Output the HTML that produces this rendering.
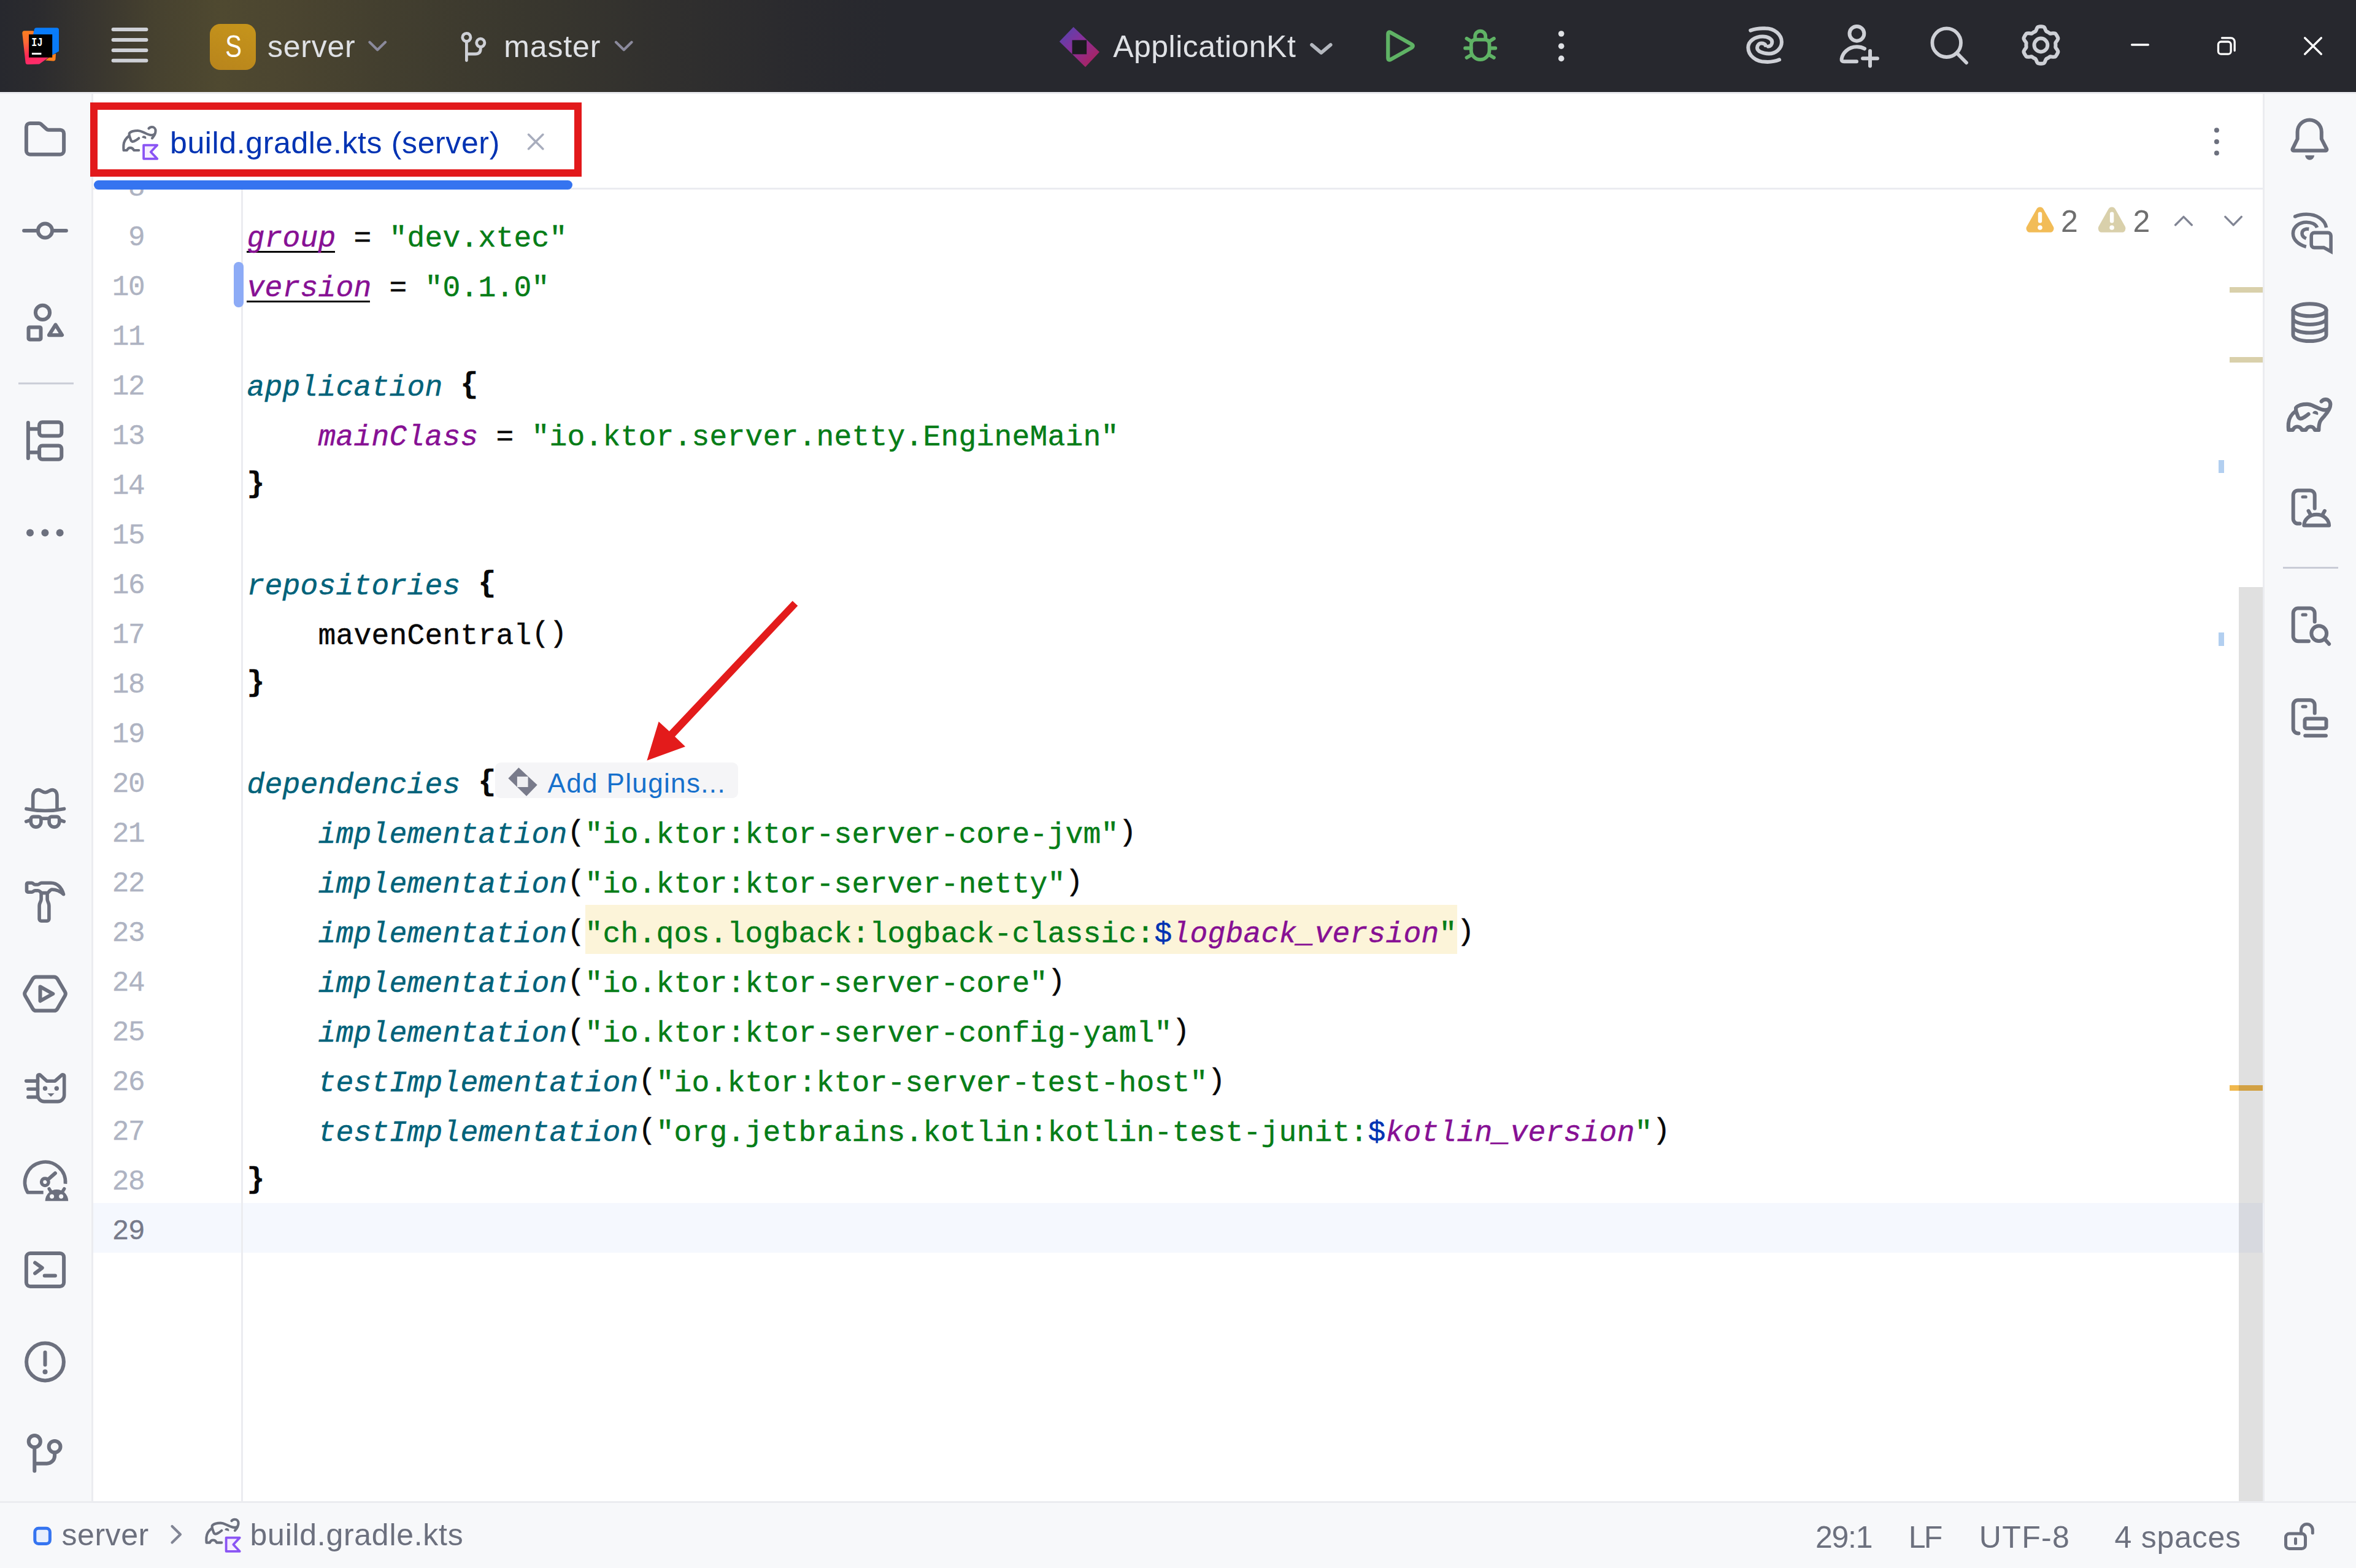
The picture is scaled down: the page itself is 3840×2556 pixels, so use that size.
<!DOCTYPE html>
<html lang="en">
<head>
<meta charset="utf-8">
<title>server – build.gradle.kts (server)</title>
<style>
*{box-sizing:border-box;margin:0;padding:0}
html,body{width:3840px;height:2556px;overflow:hidden;background:#fff}
body{position:relative;font-family:"Liberation Sans",sans-serif;color:#000}
.abs{position:absolute}
svg{position:absolute;overflow:visible}
.ui{position:absolute;white-space:nowrap;font-family:"Liberation Sans",sans-serif;line-height:1}
/* title bar */
#titlebar{left:0;top:0;width:3840px;height:150px;background:linear-gradient(90deg,#27282e 0px,#2b2b2e 60px,#38352f 150px,#46412f 250px,#4f4930 360px,#4b4530 470px,#433f2f 620px,#39372e 860px,#302f2e 1100px,#2a2a2e 1300px,#27282e 1450px,#27282e 3840px)}
#tbline{left:0;top:150px;width:3840px;height:3px;background:#ebecf0}
.tbt{color:#dfe1e5;font-size:52px}
/* side bars */
#lside{left:0;top:153px;width:152px;height:2295px;background:#f7f8fa;border-right:3px solid #ebecf0}
#rside{left:3688px;top:153px;width:152px;height:2295px;background:#f7f8fa;border-left:3px solid #ebecf0}
/* tabs */
#tabline{left:152px;top:306px;width:3537px;height:3px;background:#ebecf0}
#tabsel{left:153px;top:294px;width:780px;height:15px;border-radius:7.5px;background:#3574f0}
#redbox{left:147px;top:167px;width:801px;height:121px;border:12px solid #e2191b}
#tabtxt{left:277px;top:208px;font-size:50px;letter-spacing:.62px;color:#0033b3}
/* editor */
#gutline{left:393px;top:309px;width:3px;height:2138px;background:#ebecf0}
#caretrow{left:152px;top:1961px;width:3537px;height:81px;background:#f5f8fe}
.ln{position:absolute;left:150.5px;width:85px;letter-spacing:-1.2px;-webkit-text-stroke:.3px;text-align:right;font:46px/81px "Liberation Mono",monospace;color:#aeb3c2;white-space:pre;height:81px}
.cl{position:absolute;left:402.5px;font:48px/81px "Liberation Mono",monospace;letter-spacing:.195px;-webkit-text-stroke:.45px;white-space:pre;height:81px;color:#080808}
.p{color:#871094;font-style:italic}
.f{color:#00627a;font-style:italic}
.s{color:#067d17}
.d{color:#0033b3}
.u{border-bottom:3.5px solid #080808;display:inline-block;line-height:53px;height:58px}
.b{font-weight:bold;position:relative;top:-5px}
.k{position:relative;top:-4.5px}
.hl{background:#fcf4d9;display:inline-block;height:81px}
#clip{left:152px;top:309px;width:3537px;height:2138px;overflow:hidden}
/* status */
#status{left:0;top:2447px;width:3840px;height:109px;background:#f7f8fa;border-top:3px solid #ebecf0}
.st{color:#6c707e;font-size:52px}
</style>
</head>
<body>
<div id="titlebar" class="abs"></div>
<div id="tbline" class="abs"></div>

<!-- TB-START -->
<svg id="tbicons" style="left:0;top:0" width="3840" height="150" viewBox="0 0 3840 150" fill="none" stroke-linecap="round" stroke-linejoin="round">
<defs>
<linearGradient id="gApp" x1="0" y1="0" x2="1" y2="1"><stop offset="0" stop-color="#4b47b0"/><stop offset=".45" stop-color="#8a2f9a"/><stop offset="1" stop-color="#b0204f"/></linearGradient>
<linearGradient id="gLeft" x1="0" y1="0" x2="0.25" y2="1"><stop offset="0" stop-color="#fc801d"/><stop offset=".35" stop-color="#fd6a35"/><stop offset=".75" stop-color="#fe2857"/><stop offset="1" stop-color="#fe2c6a"/></linearGradient><linearGradient id="gBlue" x1="1" y1="0" x2="0" y2="1"><stop offset="0" stop-color="#087cfa"/><stop offset=".6" stop-color="#0a7bf8"/><stop offset="1" stop-color="#5a63d8"/></linearGradient>
</defs>
<!-- IJ logo -->
<path d="M36.3 54Q36.3 50.5 40 50.3L53 50.2Q56 50.2 56.5 53L60 70L80 93L64 104.6L45 105Q42 105 41.6 102Z" fill="url(#gLeft)"/>
<path d="M74 98.5L85 89.5L91 87.5L90.5 96Q90.3 99.3 87 99.4Z" fill="#fc801d"/>
<path d="M56 47.5Q56.6 45.2 59.5 45.2H92.5Q96 45.2 96 48.7V83.5L84 90.5L54 90V56Z" fill="url(#gBlue)"/>
<rect x="47" y="56.1" width="38.2" height="37.6" fill="#000"/>
<rect x="51.9" y="86" width="15.5" height="3.1" fill="#fff"/>
<text transform="translate(51.3 74.8) scale(.74 1)" font-family="Liberation Mono,monospace" font-weight="bold" font-size="20.5" fill="#fff" stroke="none">IJ</text>
<!-- hamburger -->
<g stroke="#ced0d6" stroke-width="6"><path d="M184.6 47.9H238.4M184.6 65H238.4M184.6 82H238.4M184.6 98.8H238.4"/></g>
<!-- chevrons -->
<g stroke="#8b8a9c" stroke-width="4.2"><path d="M602.5 68.8L615.2 81.2L628 68.8M1004 68.8L1016.8 81.2L1029.5 68.8"/></g>
<path d="M2138 73L2153.4 86L2168.8 73" stroke="#b4b8bf" stroke-width="5.6"/>
<!-- branch -->
<g stroke="#ced0d6" stroke-width="4.8"><circle cx="760.4" cy="60.9" r="6.6"/><circle cx="783.3" cy="69.8" r="6.6"/><path d="M760.4 67.5V98.6M783.3 76.4V79.5Q783.3 88 774.5 88H760.4"/></g>
<!-- run config icon -->
<path d="M1749.6 44L1792 84.7L1769 109.3L1726.7 67.7Z" fill="url(#gApp)"/>
<rect x="1747.5" y="65.4" width="23.6" height="23" fill="#1b1b20"/>
<!-- play -->
<path d="M2262.3 56V94Q2262.3 99.5 2267 96.8L2300.3 78Q2305.3 75 2300.3 72L2267 53.2Q2262.3 50.5 2262.3 56Z" stroke="#5fb365" stroke-width="6.2"/>
<!-- bug -->
<g stroke="#5fb365" stroke-width="5.8"><path d="M2397.8 72.6Q2397.8 64.6 2405.9 64.6H2419.5Q2427.5 64.6 2427.5 72.6V82.2A14.85 14.9 0 0 1 2397.8 82.2Z"/><path d="M2404.2 64V59.1A8.5 8.5 0 0 1 2421.2 59.1V64"/><path d="M2390.5 62.8L2398.5 67.8M2388.1 78.5H2397.5M2390.5 93.9L2398.5 89.3M2434.9 62.8L2426.9 67.8M2437.3 78.5H2427.9M2434.9 93.9L2426.9 89.3"/></g>
<!-- kebab -->
<g fill="#dfe1e5"><circle cx="2544.7" cy="55" r="4.8"/><circle cx="2544.7" cy="75.2" r="4.8"/><circle cx="2544.7" cy="95.4" r="4.8"/></g>
<!-- AI spiral -->
<g stroke="#ced0d6" stroke-width="6"><path d="M2853.2 49.6Q2864 45.5 2877.5 46.3A26.4 22.3 0 0 1 2903.9 68.6A20.9 18.9 0 0 1 2883 87.5A19 9.6 0 0 1 2864 77.9A6.8 7.4 0 0 1 2870.8 70.5A6.7 3.6 0 0 1 2877.5 74.1"/><path d="M2900.1 97.3Q2890 101.5 2877.5 100.8A28.2 23.4 0 0 1 2849.3 77.4A23.7 17.9 0 0 1 2873 59.5A15.3 9.1 0 0 1 2888.3 68.6A6.4 7.1 0 0 1 2881.9 75.7"/></g>
<!-- person+ -->
<g stroke="#ced0d6" stroke-width="6"><circle cx="3026.4" cy="54.8" r="11.9"/><path d="M3039 79.3C3035 77 3031 76.3 3026.4 76.3C3012 76.3 3003 87 3001.6 96Q3001 100.3 3005.5 100.3H3026"/><path d="M3036.1 95.3H3059.9M3048 83.1V107.5"/></g>
<!-- search -->
<g stroke="#ced0d6" stroke-width="5.8"><circle cx="3172.7" cy="69.7" r="23.3"/><path d="M3189.5 86.5L3205 102.3"/></g>
<!-- gear -->
<g stroke="#ced0d6" stroke-width="6"><path d="M3350.4 73.5 L3350.4 72.5 L3350.3 71.4 L3350.2 70.4 L3350.5 69.3 L3351.5 67.9 L3352.6 66.5 L3353.5 64.9 L3354.3 63.3 L3354.3 61.9 L3353.8 60.7 L3353.2 59.6 L3352.6 58.4 L3351.9 57.3 L3351.1 56.2 L3350.4 55.1 L3349.2 54.4 L3347.4 54.3 L3345.6 54.3 L3343.8 54.5 L3342.1 54.8 L3341.0 54.5 L3340.2 53.8 L3339.3 53.3 L3338.4 52.7 L3337.5 52.2 L3336.5 51.7 L3335.6 51.3 L3334.8 50.5 L3334.1 49.0 L3333.4 47.3 L3332.6 45.7 L3331.6 44.2 L3330.3 43.6 L3329.0 43.4 L3327.7 43.3 L3326.4 43.3 L3325.1 43.3 L3323.8 43.4 L3322.5 43.6 L3321.2 44.2 L3320.2 45.7 L3319.4 47.3 L3318.7 49.0 L3318.0 50.5 L3317.2 51.3 L3316.3 51.7 L3315.3 52.2 L3314.4 52.7 L3313.5 53.3 L3312.6 53.8 L3311.8 54.5 L3310.7 54.8 L3309.0 54.5 L3307.2 54.3 L3305.4 54.3 L3303.6 54.4 L3302.4 55.1 L3301.7 56.2 L3300.9 57.3 L3300.2 58.4 L3299.6 59.6 L3299.0 60.7 L3298.5 61.9 L3298.5 63.3 L3299.3 64.9 L3300.2 66.5 L3301.3 67.9 L3302.3 69.3 L3302.6 70.4 L3302.5 71.4 L3302.4 72.5 L3302.4 73.5 L3302.4 74.5 L3302.5 75.6 L3302.6 76.6 L3302.3 77.7 L3301.3 79.1 L3300.2 80.5 L3299.3 82.1 L3298.5 83.7 L3298.5 85.1 L3299.0 86.3 L3299.6 87.4 L3300.2 88.6 L3300.9 89.7 L3301.7 90.8 L3302.4 91.9 L3303.6 92.6 L3305.4 92.7 L3307.2 92.7 L3309.0 92.5 L3310.7 92.2 L3311.8 92.5 L3312.6 93.2 L3313.5 93.7 L3314.4 94.3 L3315.3 94.8 L3316.3 95.3 L3317.2 95.7 L3318.0 96.5 L3318.7 98.0 L3319.4 99.7 L3320.2 101.3 L3321.2 102.8 L3322.5 103.4 L3323.8 103.6 L3325.1 103.7 L3326.4 103.7 L3327.7 103.7 L3329.0 103.6 L3330.3 103.4 L3331.6 102.8 L3332.6 101.3 L3333.4 99.7 L3334.1 98.0 L3334.8 96.5 L3335.6 95.7 L3336.5 95.3 L3337.5 94.8 L3338.4 94.3 L3339.3 93.7 L3340.2 93.2 L3341.0 92.5 L3342.1 92.2 L3343.8 92.5 L3345.6 92.7 L3347.4 92.7 L3349.2 92.6 L3350.4 91.9 L3351.1 90.8 L3351.9 89.7 L3352.6 88.6 L3353.2 87.4 L3353.8 86.3 L3354.3 85.1 L3354.3 83.7 L3353.5 82.1 L3352.6 80.5 L3351.5 79.1 L3350.5 77.7 L3350.2 76.6 L3350.3 75.6 L3350.4 74.5Z"/><circle cx="3326.4" cy="73.5" r="10.9"/></g>
<!-- window controls -->
<g stroke="#fff" stroke-width="3.3"><path d="M3474.6 73H3501.4"/><rect x="3615.5" y="68" width="20.6" height="20.2" rx="4.5"/><path d="M3621.5 61.8H3636A6.2 6.2 0 0 1 3642.2 68V82.5"/><path d="M3756.6 61.8L3783.4 88.2M3783.4 61.8L3756.6 88.2"/></g>
</svg>
<!-- TB-END -->
<div class="abs" style="left:342px;top:39px;width:75px;height:75px;border-radius:17px;background:linear-gradient(200deg,#c6951b,#b8841c)"></div>
<div class="ui" style="left:343px;top:50.5px;width:75px;text-align:center;font-size:50px;color:#fff;transform:scaleX(.8)">S</div>
<div class="ui tbt" id="t_server" style="left:436.0px;top:51.0px;font-size:50px;letter-spacing:0.76px">server</div>
<div class="ui tbt" id="t_master" style="left:821.2px;top:51.0px;font-size:50px;letter-spacing:0.88px">master</div>
<div class="ui tbt" id="t_app" style="left:1814.2px;top:50.6px;font-size:50px;letter-spacing:0.48px">ApplicationKt</div>

<div id="lside" class="abs"></div>
<div id="rside" class="abs"></div>
<!-- LEFT-START -->
<svg id="lefticons" style="left:0;top:153px" width="152" height="2295" viewBox="0 153 152 2295" fill="none" stroke="#6c707e" stroke-width="1.5" stroke-linecap="round" stroke-linejoin="round">
<!-- folder -->
<g transform="translate(33.5 186.5) scale(4)"><path d="M2.35 5.1a1.5 1.5 0 0 1 1.5-1.5h3.6a1.2 1.2 0 0 1 .8.3l2.35 2.1a1.2 1.2 0 0 0 .8.3h4.75a1.5 1.5 0 0 1 1.5 1.5v7a1.5 1.5 0 0 1-1.5 1.5H3.85a1.5 1.5 0 0 1-1.5-1.5z"/></g>
<!-- commit -->
<g transform="translate(33.5 336) scale(4)"><circle cx="10" cy="10" r="2.9"/><path d="M1.4 10H7.1M12.9 10H18.6"/></g>
<!-- shapes -->
<g transform="translate(33.5 485) scale(4)"><circle cx="9" cy="6.1" r="2.9"/><rect x="3.25" y="12.1" width="5" height="5" rx=".5"/><path d="M14.25 11.1L16.9 15.3H11.6Z"/></g>
<!-- separator -->
<path d="M30 625H120" stroke="#c9ccd6" stroke-width="3" stroke-linecap="butt"/>
<!-- structure -->
<g transform="translate(33.5 678) scale(4)"><path d="M3.1 2.75V17.25M3.1 5.3H7.65M3.1 14.9H7.65"/><rect x="7.65" y="2.55" width="9.05" height="5.6" rx="1.2"/><rect x="7.65" y="12.1" width="9.05" height="5.6" rx="1.2"/></g>
<!-- more -->
<g fill="#6c707e" stroke="none"><circle cx="49" cy="868.4" r="6"/><circle cx="73.4" cy="868.4" r="6"/><circle cx="97.6" cy="868.4" r="6"/></g>
<!-- hat + glasses -->
<g transform="translate(33.5 1277) scale(4)" stroke-width="1.4"><path d="M5.05 10.2V5.2C5.05 3.5 6.2 2.65 7.3 2.65C8.2 2.65 9 3.7 10.05 3.7C11.1 3.7 11.9 2.65 12.9 2.65C14 2.65 14.87 3.5 14.87 5.2V10.2"/><path d="M2.35 10.35Q10.05 11.9 17.75 10.35"/><path d="M4.2 14.6a1 1 0 0 1 1-1h2.15a1 1 0 0 1 1 1v1.1a2.07 2.07 0 0 1-4.15 0zM11.65 14.6a1 1 0 0 1 1-1h2.15a1 1 0 0 1 1 1v1.1a2.07 2.07 0 0 1-4.15 0z"/><path d="M8.5 14.3H11.5M3.9 15L2.3 15.55M16.1 15L17.7 15.55"/></g>
<!-- hammer -->
<g transform="translate(33.5 1430) scale(4)" stroke-width="1.4"><path d="M2.5 2.8a.5.5 0 0 1 .5-.5h1.6c.5 0 .7.7 1.3.7h1.1c.6 0 .9-.7 1.5-.7h3.9c2.6 0 4.4 2 5.1 4.65c-1.4-1.3-2.9-1.95-4.7-1.95c-.7 0-1.1.8-1.7 1.4h-2.5c-.6-.4-.9-.95-1.5-.95h-1.2c-.6 0-.8.6-1.3.6h-1.6a.5.5 0 0 1-.5-.5z"/><path d="M8.4 6.5V9c0 .9-.75 1.3-.75 2.6V17a.8.8 0 0 0 .8.8h2.35a.8.8 0 0 0 .8-.8V11.6c0-1.3-.7-1.7-.7-2.6V6.5"/></g>
<!-- run hexagon -->
<g transform="translate(33.5 1580) scale(4)"><path d="M1.9 10.8a1.6 1.6 0 0 1 0-1.6l3.1-5.3a1.6 1.6 0 0 1 1.4-.8h7.2a1.6 1.6 0 0 1 1.4.8l3.1 5.3a1.6 1.6 0 0 1 0 1.6l-3.1 5.3a1.6 1.6 0 0 1-1.4.8H6.4a1.6 1.6 0 0 1-1.4-.8z"/><path d="M8 7.1L13.2 10L8 12.9Z"/></g>
<!-- cat -->
<g transform="translate(33.5 1733) scale(4)" stroke-width="1.4"><path d="M7 5.3a.6.6 0 0 1 1-.45L10.7 7.3h3.35l2.75-2.45a.6.6 0 0 1 1 .45v7.7a2.65 2.65 0 0 1-2.65 2.65h-5.5a2.65 2.65 0 0 1-2.65-2.65z"/><path d="M2.3 7.27H7M3.1 10.55H7M3.1 13.85H7"/><circle cx="10" cy="10.3" r=".92" fill="#6c707e" stroke="none"/><circle cx="14.7" cy="10.3" r=".92" fill="#6c707e" stroke="none"/><path d="M10.95 12.3h2.85l-1.43 1.4z" fill="#6c707e" stroke="none"/></g>
<!-- profiler -->
<g transform="translate(33.5 1885) scale(4)"><path d="M9.3 14.7H2.9A8.25 8.25 0 1 1 18.25 11.2" stroke-width="1.4" stroke-linecap="butt"/><circle cx="9.96" cy="10.46" r="1.45" stroke-width="1.35"/><path d="M11.1 9.5L14.1 6.85"/><path d="M10.04 18.18a4.69 4.69 0 0 1 9.38 0z" fill="#6c707e" stroke="none"/><path d="M11.65 13.2l.85 1.4M17.8 13.2l-.85 1.4" stroke-width="1.35"/><circle cx="12.77" cy="16.34" r=".88" fill="#f7f8fa" stroke="none"/><circle cx="16.54" cy="16.34" r=".88" fill="#f7f8fa" stroke="none"/></g>
<!-- terminal -->
<g transform="translate(33.5 2030) scale(4)"><rect x="2.35" y="3.25" width="15.3" height="13.5" rx="1.6"/><path d="M5.9 7.1L8.8 9.2L5.9 11.4M9.8 12.4H14.1"/></g>
<!-- problems -->
<g transform="translate(33.5 2180) scale(4)"><circle cx="10" cy="10" r="7.6"/><path d="M10 6.1V11.2"/><circle cx="10" cy="14.05" r="1" fill="#6c707e" stroke="none"/></g>
<!-- git -->
<g transform="translate(33.5 2329.7) scale(4)"><circle cx="5.7" cy="5" r="2.4"/><circle cx="13.9" cy="7.15" r="2.35"/><path d="M5.7 7.4V17M13.9 9.5v1.3a3.2 3.2 0 0 1-3.2 3.2H5.7"/></g>
</svg>
<!-- LEFT-END -->
<!-- RIGHT-START -->
<svg id="righticons" style="left:3691px;top:153px" width="149" height="2295" viewBox="3691 153 149 2295" fill="none" stroke="#6c707e" stroke-width="1.5" stroke-linecap="round" stroke-linejoin="round">
<!-- bell -->
<g transform="translate(3724.4 186.5) scale(4)"><path d="M5.05 10V7.15a4.9 4.9 0 0 1 9.8 0V10l2.1 4.1a.45.45 0 0 1-.4.65H3.45a.45.45 0 0 1-.4-.65z"/><path d="M8.2 16.7h3.7a1.85 1.85 0 0 1-3.7 0z" fill="#6c707e" stroke="none"/></g>
<!-- AI chat -->
<g transform="translate(3724.5 340) scale(4)" stroke-width="1.4" stroke-linecap="butt"><path d="M4 3.27C5.4 2.6 7 2.3 8.65 2.3c4.3 0 7.5 2.2 8.15 5.44"/><circle cx="4.05" cy="3.25" r=".7" fill="#6c707e" stroke="none"/><path d="M13.04 7.74C12.5 6.4 10.8 5.55 8.65 5.55c-3 0-5.43 2-5.43 4.55c0 2.6 2.2 4.6 5.35 5.45"/><path d="M9.7 8.35C9.3 8.3 8.9 8.3 8.48 8.35c-.95.2-1.6.85-1.6 1.75c0 .95.65 1.65 1.7 2.1"/><path d="M18.65 17.5V11.05a1.2 1.2 0 0 0-1.2-1.2H11.87a1.2 1.2 0 0 0-1.2 1.2V14.7a1.2 1.2 0 0 0 1.2 1.2H15.76z" stroke-linejoin="miter"/></g>
<!-- database -->
<g transform="translate(3724.5 485.7) scale(4)"><ellipse cx="10" cy="4.9" rx="6.75" ry="2.5"/><path d="M3.25 4.9v10.2c0 1.4 3 2.5 6.75 2.5s6.75-1.1 6.75-2.5V4.9M3.25 8.3c0 1.4 3 2.5 6.75 2.5s6.75-1.1 6.75-2.5M3.25 11.7c0 1.4 3 2.5 6.75 2.5s6.75-1.1 6.75-2.5"/></g>
<!-- gradle -->
<g transform="translate(3724.5 636.3) scale(4)" stroke-width="1.55"><path d="M14.8 4.5C15.3 3.9 15.9 3.7 16.5 3.7C17.6 3.7 18.45 4.6 18.45 5.75C18.45 7.5 17.3 9 15.97 10.5C15.2 11.3 14.5 12 14.2 12.8C13.8 13.8 13.7 15 13.7 16.15H12.1C11.8 15.4 11.2 14.8 10.35 14.8C9.5 14.8 8.8 15.4 8.45 16.15H6.85C6.5 15.4 5.8 14.8 4.9 14.8C4.1 14.8 3.5 15.4 3.15 16.15H1.4C1.3 15.2 1.3 14.3 1.35 13.45C1.5 11.5 2.7 9.6 4.2 8.55"/><path d="M17.9 7.5C17.4 7.9 16.8 8.05 16.15 8.03C14.5 8 13.2 7 11.75 6.45C10.8 6 9.9 5.66 8.95 5.66C7.9 5.66 6.9 5.8 6.15 6C5.3 6.3 4.6 6.6 4.4 7.15C4.3 7.6 4.4 8.1 4.5 8.6L5.1 10.3C5.3 11 5.6 11.5 6.15 11.53C6.8 11.55 7.4 11.2 7.9 10.85C8.5 10.5 9 10.1 9.5 9.7"/><path d="M11.4 9.2a.95.95 0 0 1 1.8.55z" fill="#6c707e" stroke-width=".5"/></g>
<!-- device manager -->
<g transform="translate(3724.5 788) scale(4)"><path d="M12.05 10.2V4.85a2 2 0 0 0-2-2H5.3a2 2 0 0 0-2 2v9.55a2 2 0 0 0 2 2H6"/><path d="M7.15 5.5H8.4" stroke-width="1.3"/><path d="M7.7 17.1a5.1 4.4 0 0 1 10.2 0zM9.5 11.2l.9 1.6M16.1 11.2l-.9 1.6"/></g>
<!-- separator -->
<path d="M3721 925.5H3811" stroke="#c9ccd6" stroke-width="3" stroke-linecap="butt"/>
<!-- phone search -->
<g transform="translate(3724.5 981) scale(4)"><path d="M12.05 8.15V4.65a2 2 0 0 0-2-2H5.3a2 2 0 0 0-2 2v9.4a2 2 0 0 0 2 2H9.6"/><path d="M7.15 5.3H8.4" stroke-width="1.3"/><circle cx="13.8" cy="12.9" r="3.1"/><path d="M16.1 15.2L17.9 17.2"/></g>
<!-- phone mirror -->
<g transform="translate(3724.5 1130) scale(4)"><path d="M12.05 8.15V4.8a2 2 0 0 0-2-2H5.3a2 2 0 0 0-2 2v9.55a2 2 0 0 0 2 2H5.5"/><path d="M7.15 5.45H8.4" stroke-width="1.3"/><rect x="8" y="10.4" width="8.75" height="3.9" rx=".6"/><path d="M8.2 17.3H16.6"/></g>
</svg>
<!-- RIGHT-END -->

<!-- tabs -->
<div id="tabline" class="abs"></div>
<div id="tabsel" class="abs"></div>
<div id="tabtxt" class="ui">build.gradle.kts (server)</div>
<div id="redbox" class="abs"></div>
<!-- TAB-ICONS -->

<!-- editor -->
<div id="clip" class="abs">
<div id="caretrow" class="abs" style="left:0;top:1652px"></div>
</div>
<div id="gutline" class="abs"></div>
<!-- CODE-START -->
<div class="abs" id="code" style="left:0;top:309px;width:3689px;height:2138px;overflow:hidden">
<div class="abs" style="left:953.5px;top:1165.6px;width:1421.3px;height:80.8px;background:#fcf4d9"></div>
<div class="abs" style="left:402px;top:99.6px;width:144.2px;height:3.5px;background:#080808"></div>
<div class="abs" style="left:402px;top:180.6px;width:201px;height:3.5px;background:#080808"></div>
<div class="ln" id="ln8" style="top:-41.8px">8</div>
<div class="ln" id="ln9" style="top:39.2px">9</div>
<div class="cl" id="cl9" style="top:40.0px"><span class="p">group</span> = <span class="s">"dev.xtec"</span></div>
<div class="ln" id="ln10" style="top:120.2px">10</div>
<div class="cl" id="cl10" style="top:121.0px"><span class="p">version</span> = <span class="s">"0.1.0"</span></div>
<div class="ln" id="ln11" style="top:201.2px">11</div>
<div class="ln" id="ln12" style="top:282.2px">12</div>
<div class="cl" id="cl12" style="top:283.0px"><span class="f">application</span> <span class="b">{</span></div>
<div class="ln" id="ln13" style="top:363.2px">13</div>
<div class="cl" id="cl13" style="top:364.0px">    <span class="p">mainClass</span> = <span class="s">"io.ktor.server.netty.EngineMain"</span></div>
<div class="ln" id="ln14" style="top:444.2px">14</div>
<div class="cl" id="cl14" style="top:445.0px"><span class="b">}</span></div>
<div class="ln" id="ln15" style="top:525.2px">15</div>
<div class="ln" id="ln16" style="top:606.2px">16</div>
<div class="cl" id="cl16" style="top:607.0px"><span class="f">repositories</span> <span class="b">{</span></div>
<div class="ln" id="ln17" style="top:687.2px">17</div>
<div class="cl" id="cl17" style="top:688.0px">    mavenCentral<span class="k">()</span></div>
<div class="ln" id="ln18" style="top:768.2px">18</div>
<div class="cl" id="cl18" style="top:769.0px"><span class="b">}</span></div>
<div class="ln" id="ln19" style="top:849.2px">19</div>
<div class="ln" id="ln20" style="top:930.2px">20</div>
<div class="cl" id="cl20" style="top:931.0px"><span class="f">dependencies</span> <span class="b">{</span></div>
<div class="ln" id="ln21" style="top:1011.2px">21</div>
<div class="cl" id="cl21" style="top:1012.0px">    <span class="f">implementation</span><span class="k">(</span><span class="s">"io.ktor:ktor-server-core-jvm"</span><span class="k">)</span></div>
<div class="ln" id="ln22" style="top:1092.2px">22</div>
<div class="cl" id="cl22" style="top:1093.0px">    <span class="f">implementation</span><span class="k">(</span><span class="s">"io.ktor:ktor-server-netty"</span><span class="k">)</span></div>
<div class="ln" id="ln23" style="top:1173.2px">23</div>
<div class="cl" id="cl23" style="top:1174.0px">    <span class="f">implementation</span><span class="k">(</span><span class="s">"ch.qos.logback:logback-classic:</span><span class="d">$</span><span class="p">logback_version</span><span class="s">"</span><span class="k">)</span></div>
<div class="ln" id="ln24" style="top:1254.2px">24</div>
<div class="cl" id="cl24" style="top:1255.0px">    <span class="f">implementation</span><span class="k">(</span><span class="s">"io.ktor:ktor-server-core"</span><span class="k">)</span></div>
<div class="ln" id="ln25" style="top:1335.2px">25</div>
<div class="cl" id="cl25" style="top:1336.0px">    <span class="f">implementation</span><span class="k">(</span><span class="s">"io.ktor:ktor-server-config-yaml"</span><span class="k">)</span></div>
<div class="ln" id="ln26" style="top:1416.2px">26</div>
<div class="cl" id="cl26" style="top:1417.0px">    <span class="f">testImplementation</span><span class="k">(</span><span class="s">"io.ktor:ktor-server-test-host"</span><span class="k">)</span></div>
<div class="ln" id="ln27" style="top:1497.2px">27</div>
<div class="cl" id="cl27" style="top:1498.0px">    <span class="f">testImplementation</span><span class="k">(</span><span class="s">"org.jetbrains.kotlin:kotlin-test-junit:</span><span class="d">$</span><span class="p">kotlin_version</span><span class="s">"</span><span class="k">)</span></div>
<div class="ln" id="ln28" style="top:1578.2px">28</div>
<div class="cl" id="cl28" style="top:1579.0px"><span class="b">}</span></div>
<div class="ln" id="ln29" style="top:1659.2px;color:#767a8a">29</div>
</div>
<!-- CODE-END -->

<!-- OVL-START -->
<div class="abs" style="left:381px;top:426.5px;width:15.5px;height:74.5px;border-radius:7.75px;background:#8dabf6"></div>
<!-- error stripes + scrollbar -->
<div class="abs" style="left:3634px;top:467.7px;width:54.3px;height:9px;background:#d9d0ab"></div>
<div class="abs" style="left:3634px;top:581.7px;width:54.3px;height:9px;background:#d9d0ab"></div>
<div class="abs" style="left:3615.5px;top:749.5px;width:9.5px;height:21.5px;background:#b2cff0"></div>
<div class="abs" style="left:3615.5px;top:1031.3px;width:9.5px;height:21.5px;background:#b2cff0"></div>
<div class="abs" style="left:3634px;top:1769px;width:54.3px;height:9px;background:#f0b84e"></div>
<div class="abs" style="left:3649px;top:956.6px;width:39.3px;height:1490.4px;background:rgba(0,0,0,.12)"></div>
<!-- inlay -->
<div class="abs" style="left:807.3px;top:1242.5px;width:395.4px;height:58px;border-radius:9px;background:#f5f5f7"></div>
<div class="ui" id="t_inlay" style="left:892.6px;top:1254.6px;font-size:44px;color:#1670cc;letter-spacing:1.35px">Add Plugins...</div>
<div class="ui" id="t_w1" style="left:3359.0px;top:336.1px;font-size:50px;color:#6e6e6e">2</div>
<div class="ui" id="t_w2" style="left:3476.4px;top:336.1px;font-size:50px;color:#6e6e6e">2</div>
<svg id="ovl" style="left:152px;top:153px" width="3537" height="2295" viewBox="152 153 3537 2295" fill="none" stroke-linecap="round" stroke-linejoin="round">
<!-- inlay icon -->
<path d="M845.4 1251.2L875.7 1279.6L858.1 1297.7L828.4 1268.8Z" fill="#797b8b"/>
<rect x="842.9" y="1265.9" width="17.7" height="17.1" fill="#efeff2"/>
<!-- arrow -->
<path d="M1291.7 979.5L1300.3 987.4L1100 1200.7L1117 1217L1054.4 1239.7L1073.6 1176.2L1090.8 1191.9Z" fill="#e31b1b"/>
<!-- warnings -->
<path d="M3319.6 340.6a6.2 6.2 0 0 1 10.8 0l16.2 28.6a6.4 6.4 0 0 1-5.6 9.6h-32a6.4 6.4 0 0 1-5.6-9.6z" fill="#f2bc57"/>
<path d="M3325 348.7V360.2" stroke="#fff" stroke-width="6.4"/><circle cx="3325" cy="371" r="3.8" fill="#fff"/>
<path d="M3436.7 340.6a6.2 6.2 0 0 1 10.8 0l16.2 28.6a6.4 6.4 0 0 1-5.6 9.6h-32a6.4 6.4 0 0 1-5.6-9.6z" fill="#d9d0ab"/>
<path d="M3442.1 348.7V360.2" stroke="#fff" stroke-width="6.4"/><circle cx="3442.1" cy="371" r="3.8" fill="#fff"/>
<g stroke="#818594" stroke-width="3.4"><path d="M3545.7 366.7L3559 353.4L3572.3 366.7M3626.9 353.4L3640.2 366.9L3653.3 353.4"/></g>
<!-- tab kebab -->
<g fill="#6c707e"><circle cx="3612.9" cy="212.2" r="4"/><circle cx="3612.9" cy="231" r="4"/><circle cx="3612.9" cy="249.6" r="4"/></g>
<!-- tab close -->
<path d="M861.5 219.3L884.9 242.7M884.9 219.3L861.5 242.7" stroke="#a8adbd" stroke-width="3.6"/>
<!-- tab gradle-kotlin icon -->
<g transform="translate(197.3 195.7) scale(3.05)" stroke="#6c707e" stroke-width="1.35"><path d="M14.8 4.5C15.3 3.9 15.9 3.7 16.5 3.7C17.6 3.7 18.45 4.6 18.45 5.75C18.45 7.3 17.6 8.6 16.6 9.7"/><path d="M9.5 16.15H6.85C6.5 15.4 5.8 14.8 4.9 14.8C4.1 14.8 3.5 15.4 3.15 16.15H1.4C1.3 15.2 1.3 14.3 1.35 13.45C1.5 11.5 2.7 9.6 4.2 8.55"/><path d="M17.9 7.5C17.4 7.9 16.8 8.05 16.15 8.03C14.5 8 13.2 7 11.75 6.45C10.8 6 9.9 5.66 8.95 5.66C7.9 5.66 6.9 5.8 6.15 6C5.3 6.3 4.6 6.6 4.4 7.15C4.3 7.6 4.4 8.1 4.5 8.6L5.1 10.3C5.3 11 5.6 11.5 6.15 11.53C6.8 11.55 7.4 11.2 7.9 10.85C8.5 10.5 9 10.1 9.5 9.7"/><path d="M11.4 9.2a.95.95 0 0 1 1.8.55z" fill="#6c707e" stroke-width=".5"/></g>
<path d="M234.1 236.6H256.2L245.8 247.7L256.2 258.8H234.1Z" fill="#f6edff" stroke="#8a54f4" stroke-width="3.8"/>
</svg>
<!-- OVL-END -->

<div id="status" class="abs"></div>
<!-- STATUS-START -->
<div class="ui st" id="t_sserver" style="left:100.6px;top:2476.6px;font-size:50px;letter-spacing:0.52px">server</div>
<div class="ui st" id="t_sfile" style="left:407.6px;top:2476.6px;font-size:50px;letter-spacing:0.72px">build.gradle.kts</div>
<div class="ui st" id="t_pos" style="left:2959.0px;top:2480.7px;font-size:50px;letter-spacing:-1.27px">29:1</div>
<div class="ui st" id="t_lf" style="left:3110.8px;top:2480.7px;font-size:50px;letter-spacing:-2.8px">LF</div>
<div class="ui st" id="t_enc" style="left:3225.8px;top:2480.7px;font-size:50px;letter-spacing:1.35px">UTF-8</div>
<div class="ui st" id="t_ind" style="left:3446.6px;top:2480.7px;font-size:50px;letter-spacing:0.77px">4 spaces</div>
<svg id="sticons" style="left:0;top:2450px" width="3840" height="106" viewBox="0 2450 3840 106" fill="none" stroke-linecap="round" stroke-linejoin="round">
<rect x="56.8" y="2491.2" width="24.6" height="25.3" rx="6" fill="#e7effd" stroke="#3574f0" stroke-width="5"/>
<path d="M280.5 2488L294 2501.3L280.5 2514.6" stroke="#818594" stroke-width="4.2"/>
<g transform="translate(332.3 2465.4) scale(3.05)" stroke="#6c707e" stroke-width="1.35"><path d="M14.8 4.5C15.3 3.9 15.9 3.7 16.5 3.7C17.6 3.7 18.45 4.6 18.45 5.75C18.45 7.3 17.6 8.6 16.6 9.7"/><path d="M9.5 16.15H6.85C6.5 15.4 5.8 14.8 4.9 14.8C4.1 14.8 3.5 15.4 3.15 16.15H1.4C1.3 15.2 1.3 14.3 1.35 13.45C1.5 11.5 2.7 9.6 4.2 8.55"/><path d="M17.9 7.5C17.4 7.9 16.8 8.05 16.15 8.03C14.5 8 13.2 7 11.75 6.45C10.8 6 9.9 5.66 8.95 5.66C7.9 5.66 6.9 5.8 6.15 6C5.3 6.3 4.6 6.6 4.4 7.15C4.3 7.6 4.4 8.1 4.5 8.6L5.1 10.3C5.3 11 5.6 11.5 6.15 11.53C6.8 11.55 7.4 11.2 7.9 10.85C8.5 10.5 9 10.1 9.5 9.7"/><path d="M11.4 9.2a.95.95 0 0 1 1.8.55z" fill="#6c707e" stroke-width=".5"/></g>
<path d="M368.6 2506.6H390.7L380.3 2517.7L390.7 2528.8H368.6Z" fill="#f6edff" stroke="#8a54f4" stroke-width="3.8"/>
<!-- lock -->
<g stroke="#6c707e" stroke-width="5"><rect x="3725.5" y="2500" width="32" height="24.5" rx="6"/><path d="M3750.5 2500V2494a9.4 9.4 0 0 1 18.8 0V2499"/><path d="M3741.5 2508.5V2516"/></g>
</svg>
<!-- STATUS-END -->
</body>
</html>
